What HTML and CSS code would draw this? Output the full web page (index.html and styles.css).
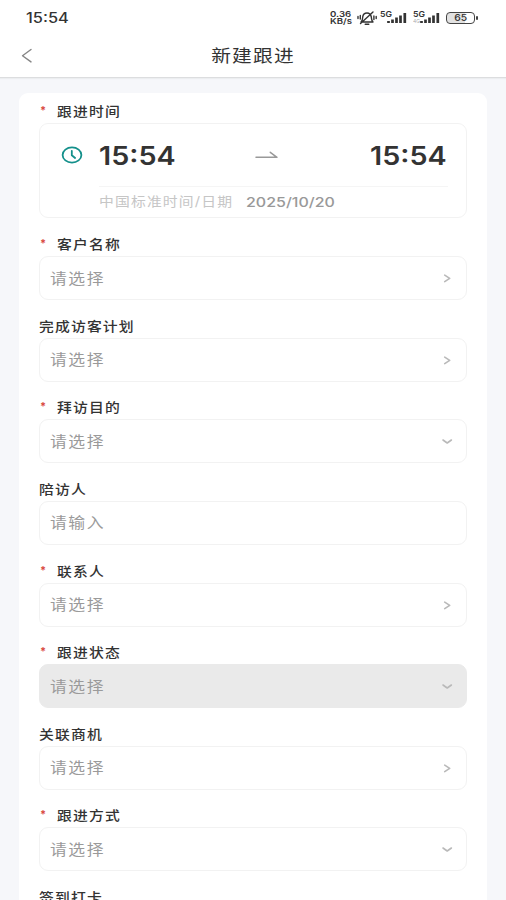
FILE: index.html
```html
<!DOCTYPE html>
<html lang="zh-CN">
<head>
<meta charset="utf-8">
<meta name="viewport" content="width=device-width, initial-scale=1">
<title>新建跟进</title>
<link rel="stylesheet" href="styles.css">
</head>
<body>
<svg class="sprite" aria-hidden="true">
  <symbol id="right" viewBox="0 0 12 12"><path d="M3.700 3.200 8.700 6.400 3.700 9.600"/></symbol>
  <symbol id="down" viewBox="0 0 12 12"><path d="M2 5 6.200 8 10.400 5"/></symbol>
</svg>
<header class="top">
  <div class="status">
    <span class="clock">15:54</span>
    <div class="indicators">
      <div class="speed"><span>0.36</span><span>KB/s</span></div>
      <svg class="mute" viewBox="0 0 20 16"><path d="M4 12h12c-1.600-1.500-1.400-3-1.700-5C13.800 4.300 12.200 3 10 3S6.200 4.300 5.800 6.500C5.500 8.500 5.800 10.500 4 12M8.200 14.200h3.600M3.500 13.500 16 2M3.300 5.500v3.500M1 6.500v2M16.900 6v3.500M19.200 6.500v2"/></svg>
      <svg class="signal" viewBox="0 0 28 18"><text x="0" y="8" textLength="12" lengthAdjust="spacingAndGlyphs">5G</text><path d="M8.500 14v-2M12.500 14v-3.500M16.500 14V8.500M20.500 14V6.500M24.800 14V4"/></svg>
      <svg class="signal second" viewBox="0 0 28 18"><text x="0" y="8" textLength="12" lengthAdjust="spacingAndGlyphs">5G</text><text class="small" x="0" y="14">4G</text><path d="M8.500 14v-2M12.500 14v-3.500M16.500 14V8.500M20.500 14V6.500M24.800 14V4"/></svg>
      <div class="battery"><span>65</span></div>
    </div>
  </div>
  <nav class="nav">
    <svg class="back" viewBox="0 0 12 16"><path d="M10 1.500 1.500 7.700l8.500 6.200"/></svg>
    <h1><span>新建跟进</span></h1>
  </nav>
</header>
<main class="card">
  <section class="field period">
    <div class="label required"><span>跟进时间</span></div>
    <div class="timebox">
      <svg class="dial" viewBox="0 0 22 18"><ellipse cx="11" cy="9" rx="9.400" ry="7.600"/><path d="M10.800 4.800v4.400l3.300 2.800"/></svg>
      <div class="timebody">
        <div class="times">
          <span class="time">15:54</span>
          <svg class="arrow" viewBox="0 0 24 10"><path d="M1 7.300h21L15.300 2.300"/></svg>
          <span class="time end">15:54</span>
        </div>
        <div class="dateline"><span class="zone">中国标准时间/日期</span><span class="date">2025/10/20</span></div>
      </div>
    </div>
  </section>
  <section class="field"><div class="label required"><span>客户名称</span></div><div class="box"><span>请选择</span><svg><use href="#right"/></svg></div></section>
  <section class="field"><div class="label"><span>完成访客计划</span></div><div class="box"><span>请选择</span><svg><use href="#right"/></svg></div></section>
  <section class="field"><div class="label required"><span>拜访目的</span></div><div class="box"><span>请选择</span><svg><use href="#down"/></svg></div></section>
  <section class="field"><div class="label"><span>陪访人</span></div><div class="box"><span>请输入</span></div></section>
  <section class="field"><div class="label required"><span>联系人</span></div><div class="box"><span>请选择</span><svg><use href="#right"/></svg></div></section>
  <section class="field"><div class="label required"><span>跟进状态</span></div><div class="box disabled"><span>请选择</span><svg><use href="#down"/></svg></div></section>
  <section class="field"><div class="label"><span>关联商机</span></div><div class="box"><span>请选择</span><svg><use href="#right"/></svg></div></section>
  <section class="field"><div class="label required"><span>跟进方式</span></div><div class="box"><span>请选择</span><svg><use href="#down"/></svg></div></section>
  <section class="field"><div class="label"><span>签到打卡</span></div></section>
</main>
</body>
</html>
```
FILE: styles.css
```css
* { box-sizing: border-box; }
html, body { height: 100%; }
body {
  display: flex;
  flex-direction: column;
  margin: 0;
  overflow: hidden;
  background: #f6f7fa;
  color: #333;
  font-family: Inter, "Noto Sans CJK SC", sans-serif;
}
span { display: inline-block; white-space: nowrap; transform-origin: left center; }
svg { display: block; flex: none; fill: none; stroke-linecap: round; stroke-linejoin: round; }
.sprite { position: absolute; width: 0; height: 0; }

.top { flex: none; height: 78px; background: #fff; border-bottom: 1px solid #dcdddf; box-shadow: 0 1px 1px #eceef0; }
.status { display: flex; justify-content: space-between; height: 35px; padding: 0 31px 0 26px; align-items: center; }
.clock { font-size: 14px; font-weight: 500; transform: scaleX(1.17); }
.indicators { display: flex; align-items: center; height: 35px; }
.speed { width: 27px; font-size: 8px; font-weight: 600; line-height: 7px; }
.speed span { display: block; height: 7px; transform: scaleX(1.2); }
.mute { width: 20px; height: 16px; stroke: #333; stroke-width: 1.4; }
.signal { width: 28px; height: 18px; margin-left: 3px; stroke: #333; stroke-width: 2.700; stroke-linecap: butt; }
.signal.second { margin-left: 5px; }
.signal text { fill: #333; stroke: none; font-size: 8px; font-weight: 600; }
.signal .small { fill: #aaa; font-size: 5px; font-weight: 400; }
.battery {
  position: relative; width: 29px; height: 12px; margin-left: 5px;
  border: 1.500px solid #444; border-radius: 4px;
  background: linear-gradient(90deg, #e2e2e2 65%, #fff 65%);
  font-size: 9px; font-weight: 500; line-height: 10px; text-align: center;
}
.battery span { transform: scaleX(1.15); transform-origin: center; }
.battery::after { content: ""; position: absolute; right: -4px; top: 3px; width: 2px; height: 4px; border-radius: 1px; background: #444; }

.nav { display: flex; align-items: center; height: 42px; padding: 0 21px; }
.back { width: 12px; height: 16px; stroke: #858585; stroke-width: 1.4; }
h1 { flex: 1; margin: 0 12px 0 0; font-size: 17px; font-weight: 400; line-height: 42px; text-align: center; letter-spacing: 1px; }
h1 span { transform: scaleX(1.16); transform-origin: center; }

.card { flex: 1; min-height: 0; overflow: hidden; margin: 15px 19px 0; padding: 6px 20px 0; border-radius: 9px 9px 0 0; background: #fff; }
.field { height: 81.650px; }
.period { height: 133px; }
.label { display: flex; height: 24px; font-size: 13px; font-weight: 500; line-height: 25px; letter-spacing: 1px; }
.label span { transform: scaleX(1.14); }
.required::before { content: "*"; width: 16.500px; padding-left: 1px; color: #d94a40; font-size: 11px; font-weight: 700; line-height: 23px; }
.box {
  display: flex; align-items: center; justify-content: space-between;
  height: 44px; padding: 0 13px 0 10px;
  border: 1px solid #f2f2f2; border-radius: 9px;
  color: #9a9a9a; font-size: 14.500px; letter-spacing: 1.300px;
}
.box span { margin-top: -2px; transform: scaleX(1.16); }
.box svg { width: 12px; height: 12px; stroke: #b9b9b9; stroke-width: 1.6; }
.disabled { background: #eaeaea; border-color: #eaeaea; }

.timebox { display: flex; height: 95px; padding: 0 18px 0 21px; border: 1px solid #f2f2f2; border-radius: 9px; }
.dial { width: 22px; height: 18px; margin-top: 22px; stroke: #14908b; stroke-width: 1.8; }
.timebody { flex: 1; margin-left: 16px; }
.times { display: flex; align-items: center; justify-content: space-between; height: 63px; border-bottom: 1px solid #f5f5f5; }
.time { margin-top: 1px; font-size: 25px; font-weight: 600; line-height: 30px; transform: scaleX(1.15); }
.time.end { margin-right: 1px; transform-origin: right center; }
.arrow { width: 24px; height: 10px; margin-right: 13px; stroke: #999; stroke-width: 1.5; }
.dateline { display: flex; align-items: center; height: 30px; color: #c6c6c6; font-size: 13px; line-height: 20px; }
.zone { width: 147px; margin-top: -3px; letter-spacing: 1px; transform: scaleX(1.14); }
.date { color: #999; font-weight: 500; transform: scaleX(1.23); }
```
